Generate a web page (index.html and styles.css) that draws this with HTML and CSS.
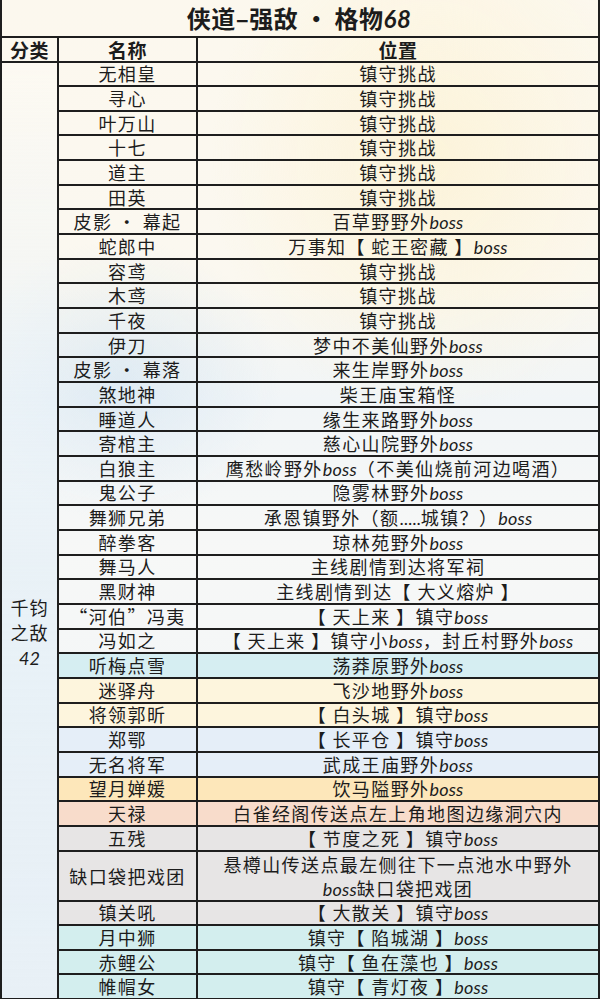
FILE: index.html
```html
<!DOCTYPE html>
<html lang="zh-CN">
<head>
<meta charset="utf-8">
<title>侠道-强敌·格物68</title>
<link rel="stylesheet" href="styles.css">
</head>
<body>
<table class="sheet">
  <colgroup>
    <col class="c-cat">
    <col class="c-name">
    <col class="c-loc">
  </colgroup>
  <tr class="title-row"><td colspan="3" class="title">侠道–强敌 · 格物<span class="num">68</span></td></tr>
  <tr class="head-row"><th>分类</th><th>名称</th><th>位置</th></tr>
  <tr><td class="cat" rowspan="37"><div class="cat-text">千钧<br>之敌<br><span class="num">42</span></div></td><td>无相皇</td><td>镇守挑战</td></tr>
  <tr><td>寻心</td><td>镇守挑战</td></tr>
  <tr><td>叶万山</td><td>镇守挑战</td></tr>
  <tr><td>十七</td><td>镇守挑战</td></tr>
  <tr><td>道主</td><td>镇守挑战</td></tr>
  <tr><td>田英</td><td>镇守挑战</td></tr>
  <tr><td>皮影 · 幕起</td><td>百草野野外<span class="en">boss</span></td></tr>
  <tr><td>蛇郎中</td><td>万事知【 蛇王密藏 】<span class="en">boss</span></td></tr>
  <tr><td>容鸢</td><td>镇守挑战</td></tr>
  <tr><td>木鸢</td><td>镇守挑战</td></tr>
  <tr><td>千夜</td><td>镇守挑战</td></tr>
  <tr><td>伊刀</td><td>梦中不美仙野外<span class="en">boss</span></td></tr>
  <tr><td>皮影 · 幕落</td><td>来生岸野外<span class="en">boss</span></td></tr>
  <tr><td>煞地神</td><td>柴王庙宝箱怪</td></tr>
  <tr><td>睡道人</td><td>缘生来路野外<span class="en">boss</span></td></tr>
  <tr><td>寄棺主</td><td>慈心山院野外<span class="en">boss</span></td></tr>
  <tr><td>白狼主</td><td>鹰愁岭野外<span class="en">boss</span>（不美仙烧前河边喝酒）</td></tr>
  <tr><td>鬼公子</td><td>隐雾林野外<span class="en">boss</span></td></tr>
  <tr><td>舞狮兄弟</td><td>承恩镇野外（额<span class="dots">.....</span>城镇？）<span class="en">boss</span></td></tr>
  <tr><td>醉拳客</td><td>琼林苑野外<span class="en">boss</span></td></tr>
  <tr><td>舞马人</td><td>主线剧情到达将军祠</td></tr>
  <tr><td>黑财神</td><td>主线剧情到达【 大义熔炉 】</td></tr>
  <tr><td>“河伯”冯夷</td><td>【 天上来 】镇守<span class="en">boss</span></td></tr>
  <tr><td>冯如之</td><td>【 天上来 】镇守小<span class="en">boss</span>，封丘村野外<span class="en">boss</span></td></tr>
  <tr class="cyan"><td>听梅点雪</td><td>荡莽原野外<span class="en">boss</span></td></tr>
  <tr class="cream"><td>迷驿舟</td><td>飞沙地野外<span class="en">boss</span></td></tr>
  <tr class="cream"><td>将领郭昕</td><td>【 白头城 】镇守<span class="en">boss</span></td></tr>
  <tr class="blue"><td>郑鄂</td><td>【 长平仓 】镇守<span class="en">boss</span></td></tr>
  <tr class="blue"><td>无名将军</td><td>武成王庙野外<span class="en">boss</span></td></tr>
  <tr class="gold"><td>望月婵媛</td><td>饮马隘野外<span class="en">boss</span></td></tr>
  <tr class="peach"><td>天禄</td><td>白雀经阁传送点左上角地图边缘洞穴内</td></tr>
  <tr class="gray"><td>五残</td><td>【 节度之死 】镇守<span class="en">boss</span></td></tr>
  <tr class="gray tall"><td>缺口袋把戏团</td><td>悬樽山传送点最左侧往下一点池水中野外<br><span class="en">boss</span>缺口袋把戏团</td></tr>
  <tr class="gray"><td>镇关吼</td><td>【 大散关 】镇守<span class="en">boss</span></td></tr>
  <tr class="teal"><td>月中狮</td><td>镇守【 陷城湖 】<span class="en">boss</span></td></tr>
  <tr class="teal"><td>赤鲤公</td><td>镇守【 鱼在藻也 】<span class="en">boss</span></td></tr>
  <tr class="teal"><td>帷帽女</td><td>镇守【 青灯夜 】<span class="en">boss</span></td></tr>
</table>
</body>
</html>
```

FILE: styles.css
```css
html, body {
  margin: 0;
  padding: 0;
}

body {
  width: 600px;
  background: #f7f8f6;
  font-family: "Noto Sans CJK SC", "Noto Sans", sans-serif;
  color: #1c1c1c;
}

.sheet {
  width: 600px;
  table-layout: fixed;
  border-collapse: collapse;
  background:
    radial-gradient(ellipse 220px 260px at 430px 160px, rgba(253, 240, 200, 0.55), rgba(253, 240, 200, 0) 100%),
    radial-gradient(ellipse 160px 140px at 120px 380px, rgba(200, 222, 240, 0.45), rgba(200, 222, 240, 0) 100%),
    linear-gradient(to bottom, #fcf8ee 0%, #fbf8f0 28%, #f1f5f7 40%, #f7f8f7 55%, #f2f5f7 75%, #eef3f6 100%);
}

.c-cat { width: 57px; }
.c-name { width: 139px; }

.sheet td,
.sheet th {
  border: 2px solid #1e1e1e;
  padding: 0;
  text-align: center;
  vertical-align: middle;
  font-size: 18px;
  font-weight: 400;
  letter-spacing: 1.4px;
  line-height: 19px;
  white-space: nowrap;
}

.sheet tr {
  height: 24.66px;
}

.sheet .title-row {
  height: 37px;
}

.sheet .title {
  border-top: none;
  font-size: 24px;
  font-weight: 700;
  letter-spacing: 0.5px;
  line-height: 30px;
  padding-right: 2px;
}

.title .num {
  font-family: Lato, "Noto Sans", sans-serif;
  font-style: italic;
  font-weight: 700;
}

.sheet .head-row {
  height: 24.5px;
}

.sheet .head-row th {
  font-size: 19px;
  font-weight: 700;
  letter-spacing: 0.5px;
}

.sheet .cat {
  vertical-align: top;
  padding-top: 532px;
  background: linear-gradient(to bottom, rgba(255, 255, 255, 0.2), rgba(230, 240, 247, 0.8) 55%, #e8f0f6 100%);
}

.cat-text {
  line-height: 25px;
  letter-spacing: 1px;
}

.cat-text .num {
  font-family: Lato, "Noto Sans", sans-serif;
  font-style: italic;
  letter-spacing: 0;
}

.en {
  font-family: Lato, "Noto Sans", sans-serif;
  font-style: italic;
  letter-spacing: 0.2px;
  line-height: 1;
}

.dots {
  font-family: Lato, "Noto Sans", sans-serif;
  letter-spacing: 0;
  line-height: 1;
}

.sheet .tall {
  height: 49.32px;
}

.sheet .tall td {
  line-height: 24px;
}

.cyan td { background: #d6eef2; }
.cream td { background: #fdf5dd; }
.blue td { background: #e5eef8; }
.gold td { background: #fde7ba; }
.peach td { background: #f8dccb; }
.gray td { background: #e7e5e5; }
.teal td { background: #d3eeee; }
```
